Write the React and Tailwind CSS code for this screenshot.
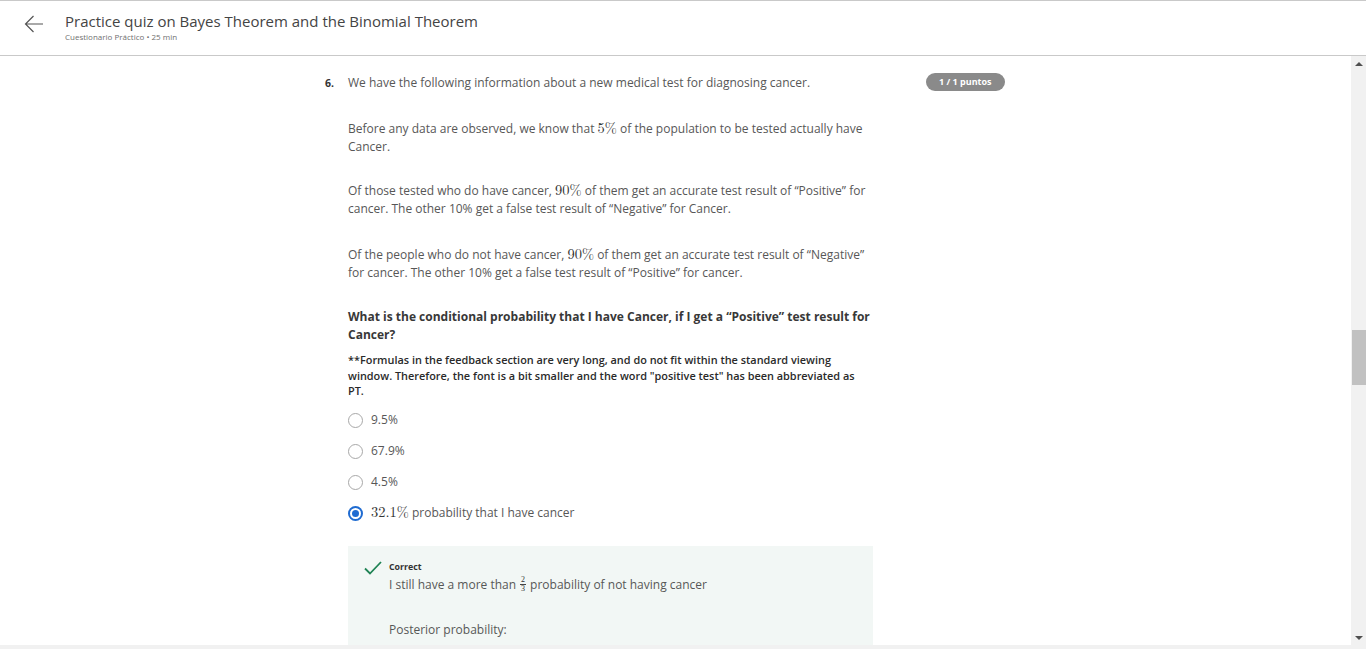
import React from "react";

const sans = { fontFamily: '"Open Sans", "Noto Sans", sans-serif' };

function M({ children }) {
  return (
    <span className="text-[14.5px] leading-none text-[#333]" style={{ fontFamily: '"Latin Modern Roman", "Liberation Serif", "DejaVu Serif", serif' }}>
      {children}
    </span>
  );
}

function Radio({ checked }) {
  if (checked) {
    return (
      <span className="w-[15px] h-[15px] rounded-full border-2 border-[#1f6bd1] flex items-center justify-center shrink-0">
        <span className="w-[7px] h-[7px] rounded-full bg-[#1f6bd1]" />
      </span>
    );
  }
  return <span className="w-[15px] h-[15px] rounded-full border border-[#a8a8a8] bg-white shrink-0" />;
}

const options = [
  { label: "9.5%" },
  { label: "67.9%" },
  { label: "4.5%" },
];

export default function App() {
  return (
    <div className="h-[649px] w-[1366px] flex flex-col overflow-hidden bg-white text-[#575757]" style={sans}>
      <header className="h-[56px] border-t border-b border-[#c9c9c9] flex items-center shrink-0">
        <div className="w-[65px] flex justify-center pl-[3px] pt-[14px] self-stretch">
          <svg width="20" height="18" viewBox="0 0 20 18" fill="none" stroke="#555" strokeWidth="1.2">
            <path d="M19 9H1.5M9.5 1L1.5 9l8 8" />
          </svg>
        </div>
        <div className="flex flex-col pb-[3px]">
          <span className="text-[15px] leading-[20px] text-[#444]">Practice quiz on Bayes Theorem and the Binomial Theorem</span>
          <span className="text-[8px] leading-[12px] text-[#707070]">Cuestionario Práctico • 25 min</span>
        </div>
      </header>

      <div className="flex-1 flex min-h-0">
        <main className="flex-1 overflow-hidden">
          <div className="pl-[325px] pt-[18px] flex items-start">
            <div className="w-[23px] text-[10.5px] font-bold leading-[18px] text-[#333]">6.</div>
            <div className="w-[526px] text-[12px] leading-[18px]">
              <p>We have the following information about a new medical test for diagnosing cancer.</p>
              <p className="mt-[28px]">
                Before any data are observed, we know that <M>5%</M> of the population to be tested actually have Cancer.
              </p>
              <p className="mt-[26px]">
                Of those tested who do have cancer, <M>90%</M> of them get an accurate test result of “Positive” for
                cancer. The other 10% get a false test result of “Negative” for Cancer.
              </p>
              <p className="mt-[28px]">
                Of the people who do not have cancer, <M>90%</M> of them get an accurate test result of “Negative”
                for cancer. The other 10% get a false test result of “Positive” for cancer.
              </p>
              <p className="mt-[26px] font-bold text-[#383838] text-[12px]">
                What is the conditional probability that I have Cancer, if I get a “Positive” test result for Cancer?
              </p>
              <p className="mt-[8px] w-[512px] font-semibold text-[10.9px] leading-[15.5px] text-[#2a2a2a]">
                **Formulas in the feedback section are very long, and do not fit within the standard viewing window.
                Therefore, the font is a bit smaller and the word "positive test" has been abbreviated as PT.
              </p>

              <div className="mt-[6px] flex flex-col">
                {options.map((o) => (
                  <div key={o.label} className="h-[31px] flex items-center gap-[8px]">
                    <Radio />
                    <span className="text-[12px]">{o.label}</span>
                  </div>
                ))}
                <div className="h-[31px] flex items-center gap-[8px]">
                  <Radio checked />
                  <span className="text-[12px]">
                    <M>32.1%</M> probability that I have cancer
                  </span>
                </div>
              </div>

              <div className="mt-[17px] bg-[#f2f7f5] pl-[16px] pt-[14px] pb-[20px] w-[525px]">
                <div className="flex">
                  <div className="w-[25px] pt-[1px]">
                    <svg width="18" height="14" viewBox="0 0 18 14" fill="none" stroke="#1f8354" strokeWidth="1.8">
                      <path d="M1 7.5l5 5L17 1" />
                    </svg>
                  </div>
                  <div className="flex flex-col">
                    <span className="text-[8.8px] font-bold leading-[14px] text-[#333]">Correct</span>
                    <span className="mt-[2px] text-[12px] leading-[18px] flex items-center">
                      I still have a more than
                      <span className="inline-flex flex-col items-center mx-[4px] text-[8px] leading-[8px] text-[#333]" style={{ fontFamily: '"Liberation Serif", serif' }}>
                        <span>2</span>
                        <span className="w-[6px] border-t border-[#444]" />
                        <span>3</span>
                      </span>
                      probability of not having cancer
                    </span>
                    <span className="mt-[27px] text-[12px] leading-[18px]">Posterior probability:</span>
                  </div>
                </div>
              </div>
            </div>
            <div className="ml-[52px] -mt-[1px] flex">
              <span className="inline-flex items-center h-[18px] px-[13px] rounded-full bg-[#8a8a8a] text-white text-[9px] font-bold">
                1 / 1 puntos
              </span>
            </div>
          </div>
        </main>

        <div className="w-[15px] bg-[#f1f1f1] flex flex-col items-center shrink-0">
          <div className="h-[15px] flex items-center justify-center">
            <span className="w-0 h-0 border-l-[4px] border-r-[4px] border-b-[4px] border-l-transparent border-r-transparent border-b-[#505050]" />
          </div>
          <div className="h-[259px]" />
          <div className="w-[14px] h-[55px] bg-[#c1c1c1]" />
          <div className="flex-1" />
          <div className="h-[15px] flex items-center justify-center">
            <span className="w-0 h-0 border-l-[4px] border-r-[4px] border-t-[4px] border-l-transparent border-r-transparent border-t-[#505050]" />
          </div>
        </div>
      </div>
      <div className="h-[4px] bg-[#f1f1f1] shrink-0" />
    </div>
  );
}
